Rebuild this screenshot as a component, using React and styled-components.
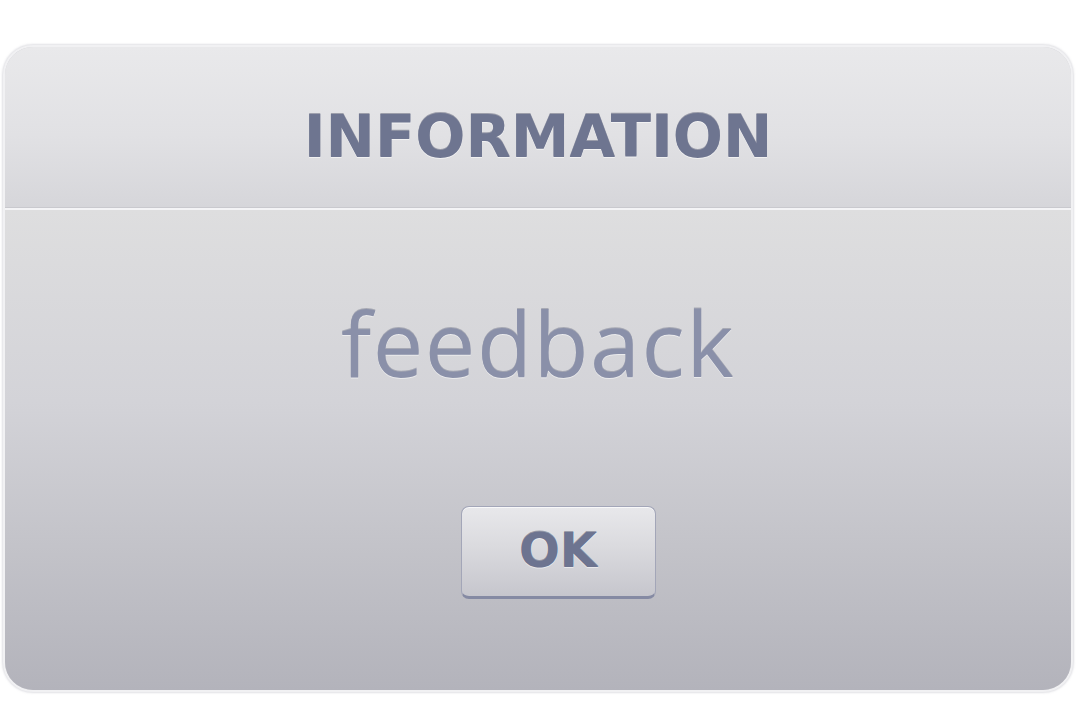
import React from "react";
import styled, { createGlobalStyle } from "styled-components";

const Global = createGlobalStyle`
  html, body {
    margin: 0;
    padding: 0;
    background: #ffffff;
  }
  body {
    font-family: "DejaVu Sans", "Liberation Sans", sans-serif;
  }
`;

const Page = styled.div`
  width: 1080px;
  height: 720px;
  box-sizing: border-box;
  padding: 45px 7px 28px 3px;
  display: flex;
`;

const Dialog = styled.div`
  flex: 1;
  display: flex;
  flex-direction: column;
  border-radius: 30px;
  overflow: hidden;
  border: 2px solid #f1f1f3;
  box-shadow: 0 0 2px 1px rgba(170, 170, 180, 0.35);
  background: #d4d4d9;
`;

const Header = styled.div`
  height: 160px;
  box-sizing: border-box;
  padding-top: 60px;
  display: flex;
  justify-content: center;
  align-items: flex-start;
  background: linear-gradient(180deg, #e9e9eb 0%, #e1e1e4 55%, #d6d6da 100%);
`;

const Title = styled.h1`
  margin: 0;
  font-family: "DejaVu Sans", "Verdana", sans-serif;
  font-weight: bold;
  font-size: 59px;
  line-height: 1;
  color: #6e7590;
  text-shadow: 0 -1px 0 rgba(70, 76, 100, 0.45), 0 1px 0 rgba(255, 255, 255, 0.55);
`;

const Divider = styled.div`
  height: 2px;
  background: #f4f4f6;
  border-top: 1px solid #c9c9ce;
`;

const Body = styled.div`
  flex: 1;
  display: flex;
  flex-direction: column;
  align-items: center;
  padding-top: 87px;
  background: linear-gradient(180deg, #dededf 0%, #d3d3d8 40%, #c3c3c9 70%, #b3b3bb 100%);
`;

const Message = styled.p`
  margin: 0;
  font-family: "Open Sans", "Noto Sans", sans-serif;
  font-weight: 400;
  font-size: 90px;
  line-height: 1;
  letter-spacing: 1.5px;
  color: #8a90a9;
  text-shadow: 0 -1px 0 rgba(80, 86, 110, 0.35), 0 1px 0 rgba(255, 255, 255, 0.5);
`;

const OkButton = styled.button`
  margin-top: 119px;
  margin-left: 40px;
  width: 195px;
  height: 93px;
  box-sizing: border-box;
  padding: 0 0 4px;
  border: 1px solid #a3a6b8;
  border-bottom: 3px solid #858aa3;
  border-radius: 8px;
  background: linear-gradient(180deg, #e8e8eb 0%, #dadade 45%, #c6c6cd 100%);
  box-shadow: inset 0 1px 0 rgba(255, 255, 255, 0.7);
  display: flex;
  align-items: center;
  justify-content: center;
  font-family: "DejaVu Sans", "Verdana", sans-serif;
  font-weight: bold;
  font-size: 48px;
  line-height: 1;
  color: #6d7490;
  text-shadow: 0 -1px 0 rgba(70, 76, 100, 0.45), 0 1px 0 rgba(255, 255, 255, 0.5);
  cursor: pointer;
`;

export default function App() {
  return (
    <>
      <Global />
      <Page>
        <Dialog>
          <Header>
            <Title>INFORMATION</Title>
          </Header>
          <Divider />
          <Body>
            <Message>feedback</Message>
            <OkButton>OK</OkButton>
          </Body>
        </Dialog>
      </Page>
    </>
  );
}
